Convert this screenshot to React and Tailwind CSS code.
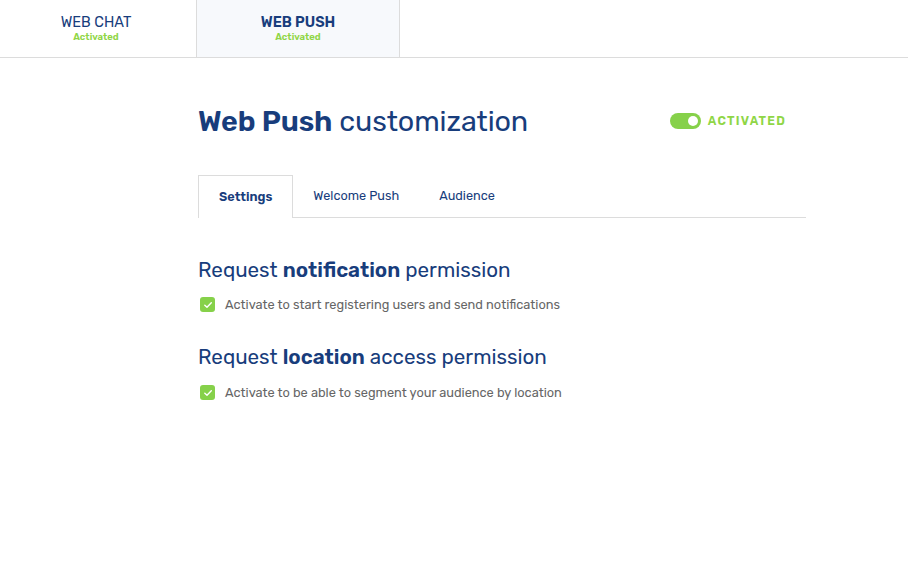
import React, { useState } from "react";

const font = { fontFamily: "Rubik, 'Noto Sans', 'Open Sans', sans-serif" };

function Check() {
  return (
    <span className="w-[15px] h-[15px] rounded-[3px] bg-[#86d14a] flex items-center justify-center shrink-0">
      <svg width="10" height="10" viewBox="0 0 10 10" fill="none">
        <path d="M1.8 5.2 L4 7.2 L8.3 2.8" stroke="white" strokeWidth="1.4" strokeLinecap="round" strokeLinejoin="round" />
      </svg>
    </span>
  );
}

export default function App() {
  const [tab, setTab] = useState("Settings");
  const tabs = ["Settings", "Welcome Push", "Audience"];

  return (
    <div className="w-[908px] h-[581px] bg-white text-[#183d7c]" style={font}>
      {/* channel tabs */}
      <div className="flex h-[58px] border-b border-[#dcdcdc]">
        <div className="w-[196px] flex flex-col items-center justify-center pb-[2px] pr-[4px]">
          <span className="text-[14.5px] leading-[18px] text-[#183d7c]">WEB CHAT</span>
          <span className="text-[9.5px] leading-[12px] font-semibold text-[#8fd646]">Activated</span>
        </div>
        <div className="w-[204px] flex flex-col items-center justify-center pb-[2px] bg-[#f7f9fc] border-x border-[#dcdcdc]">
          <span className="text-[14.5px] leading-[18px] font-semibold text-[#183d7c]">WEB PUSH</span>
          <span className="text-[9.5px] leading-[12px] font-semibold text-[#8fd646]">Activated</span>
        </div>
      </div>

      <div className="w-[608px] ml-[198px]">
        <div className="flex items-center justify-between mt-[44px] h-[38px]">
          <h1 className="text-[28.7px] leading-[38px] tracking-[-0.1px]">
            <span className="font-semibold">Web Push</span> customization
          </h1>
          <div className="flex items-center gap-[7px] mr-[20px]">
            <span className="w-[31px] h-[16px] rounded-full bg-[#86d14a] flex items-center justify-end pr-[3px]">
              <span className="w-[10px] h-[10px] rounded-full bg-white" />
            </span>
            <span className="text-[12.2px] font-semibold tracking-[1.2px] text-[#8fd646]">ACTIVATED</span>
          </div>
        </div>

        {/* sub tabs */}
        <div className="flex mt-[35px] border-b border-[#dcdcdc] h-[43px]">
          {tabs.map((t) => (
            <button
              key={t}
              onClick={() => setTab(t)}
              className={
                t === tab
                  ? "h-[43px] px-[20px] text-[12.7px] font-semibold text-[#183d7c] border-x border-t border-[#dcdcdc] bg-white -mb-px"
                  : "h-[42px] px-[20px] text-[12.7px] text-[#183d7c]"
              }
            >
              {t}
            </button>
          ))}
        </div>

        <h2 className="text-[20.6px] leading-[26px] mt-[39px]">
          Request <span className="font-semibold">notification</span> permission
        </h2>
        <div className="flex items-center gap-[10px] mt-[12px] ml-[2px]">
          <Check />
          <span className="text-[12.8px] text-[#666]">Activate to start registering users and send notifications</span>
        </div>

        <h2 className="text-[20.6px] leading-[26px] mt-[30px]">
          Request <span className="font-semibold">location</span> access permission
        </h2>
        <div className="flex items-center gap-[10px] mt-[13px] ml-[2px]">
          <Check />
          <span className="text-[12.8px] text-[#666]">Activate to be able to segment your audience by location</span>
        </div>
      </div>
    </div>
  );
}
